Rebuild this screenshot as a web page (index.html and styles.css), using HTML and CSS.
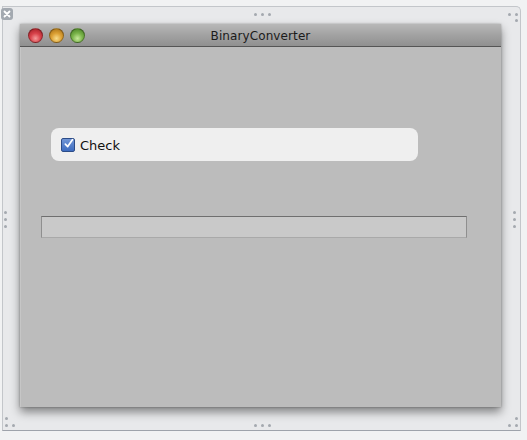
FILE: index.html
```html
<!DOCTYPE html>
<html>
<head>
<meta charset="utf-8">
<link rel="stylesheet" href="styles.css">
</head>
<body>
<div class="stage">
  <div class="close-badge">
    <svg width="12" height="12" viewBox="0 0 12 12"><path d="M3.5 3.5 L8.5 8.5 M8.5 3.5 L3.5 8.5" stroke="#fff" stroke-width="1.8" stroke-linecap="round"/></svg>
  </div>
  <div class="frame">
    <div class="window">
      <div class="titlebar">
        <div class="lights">
          <span class="light red"></span>
          <span class="light yellow"></span>
          <span class="light green"></span>
        </div>
        <div class="title">BinaryConverter</div>
      </div>
      <div class="content">
        <div class="check-panel">
          <span class="checkbox">
            <svg width="14" height="14" viewBox="0 0 14 14"><path d="M3 7.2 L6 10.2 L12 1.5" fill="none" stroke="#fff" stroke-width="2.2" stroke-linecap="round" stroke-linejoin="round"/></svg>
          </span>
          <span class="check-label">Check</span>
        </div>
        <div class="field"></div>
      </div>
    </div>
  </div>
  <div class="dots dots-top"><i></i><i></i><i></i></div>
  <div class="dots dots-bottom"><i></i><i></i><i></i></div>
  <div class="dots dots-left"><i></i><i></i><i></i></div>
  <div class="dots dots-right"><i></i><i></i><i></i></div>
  <div class="corner corner-tr"><i class="a"></i><i class="b"></i><i class="c"></i></div>
  <div class="corner corner-bl"><i class="a"></i><i class="b"></i><i class="c"></i></div>
  <div class="corner corner-br"><i class="a"></i><i class="b"></i><i class="c"></i></div>
</div>
</body>
</html>
```

FILE: styles.css
```css
html, body {
  margin: 0;
  padding: 0;
  background: #f1f2f3;
}
.stage {
  position: relative;
  width: 527px;
  height: 440px;
  overflow: hidden;
  background: #f1f2f3;
  padding-top: 6px;
  box-sizing: border-box;
  font-family: "DejaVu Sans", "Liberation Sans", sans-serif;
}
.frame {
  margin-left: 2px;
  width: 519px;
  height: 425px;
  border: 1px solid #c3c6ca;
  border-bottom-color: #9ea3ab;
  border-top-right-radius: 5px;
  background: #e8e9eb;
  padding: 17px 0 0 17px;
  box-sizing: border-box;
}
.window {
  width: 481px;
  height: 383px;
  display: flex;
  flex-direction: column;
  box-shadow: 0 5px 9px rgba(0,0,0,0.45), 0 0 2px rgba(0,0,0,0.3);
}
.titlebar {
  position: relative;
  height: 23px;
  flex: none;
  background: linear-gradient(#b8b8b8, #a2a2a2 50%, #909090);
  border-bottom: 1px solid #555;
  box-sizing: border-box;
  display: flex;
  align-items: center;
  justify-content: center;
}
.lights {
  position: absolute;
  left: 8px;
  top: 4px;
  display: flex;
  gap: 6px;
}
.light {
  width: 15px;
  height: 15px;
  border-radius: 50%;
  box-sizing: border-box;
  border: 1px solid rgba(0,0,0,0.3);
}
.red { background: radial-gradient(circle at 50% 72%, #f59a9a 0%, #d8424a 45%, #9a1a22 100%); }
.yellow { background: radial-gradient(circle at 50% 72%, #f8dc8a 0%, #dca034 45%, #a06a12 100%); }
.green { background: radial-gradient(circle at 50% 72%, #c6e89a 0%, #7ab44a 45%, #427a20 100%); }
.title {
  font-size: 12px;
  color: #1b1b1b;
  letter-spacing: 0.1px;
  padding-top: 1px;
}
.content {
  flex: 1;
  background: #bcbcbc;
  border-left: 1px solid #c6c6c6;
  padding: 81px 0 0 30px;
  display: flex;
  flex-direction: column;
  align-items: flex-start;
}
.check-panel {
  width: 367px;
  height: 33px;
  background: #efefef;
  border-radius: 8px;
  display: flex;
  align-items: center;
  padding-left: 10px;
  padding-top: 1px;
  box-sizing: border-box;
  gap: 5px;
}
.checkbox {
  width: 14px;
  height: 14px;
  border-radius: 2px;
  background: linear-gradient(#7196d6, #3d6cc0);
  border: 1px solid #2c4c88;
  box-sizing: border-box;
  display: flex;
  align-items: center;
  justify-content: center;
  margin-top: -1px;
}
.checkbox svg { margin-top: -2px; margin-left: 1px; }
.check-label {
  font-size: 13px;
  color: #111;
}
.field {
  margin-top: 55px;
  margin-left: -10px;
  width: 426px;
  height: 22px;
  background: #c9c9c9;
  border: 1px solid #8f8f8f;
  border-top-color: #6f6f6f;
  border-bottom-color: #a9a9a9;
  box-sizing: border-box;
}
.close-badge {
  position: absolute;
  left: 1px;
  top: 8px;
  width: 12px;
  height: 12px;
  border-radius: 3px;
  background: #a3a9b0;
  display: flex;
  align-items: center;
  justify-content: center;
}
.close-badge svg { display: block; }
.dots {
  position: absolute;
  display: flex;
  gap: 4px;
}
.dots i, .corner i {
  display: block;
  width: 3px;
  height: 3px;
  background: #a4a9af;
  border-radius: 1.5px;
}
.dots-top { left: 254px; top: 13px; }
.dots-bottom { left: 254px; top: 424px; }
.dots-left { left: 4px; top: 211px; flex-direction: column; }
.dots-right { left: 513px; top: 211px; flex-direction: column; }
.corner { position: absolute; width: 10px; height: 10px; }
.corner i { position: absolute; }
.corner-tr { left: 508px; top: 13px; }
.corner-tr .a { left: 0; top: 0; }
.corner-tr .b { left: 7px; top: 0; }
.corner-tr .c { left: 7px; top: 6px; }
.corner-bl { left: 5px; top: 417px; }
.corner-bl .a { left: 0; top: 0; }
.corner-bl .b { left: 0; top: 7px; }
.corner-bl .c { left: 7px; top: 7px; }
.corner-br { left: 508px; top: 417px; }
.corner-br .a { left: 7px; top: 0; }
.corner-br .b { left: 0; top: 7px; }
.corner-br .c { left: 7px; top: 7px; }
```
